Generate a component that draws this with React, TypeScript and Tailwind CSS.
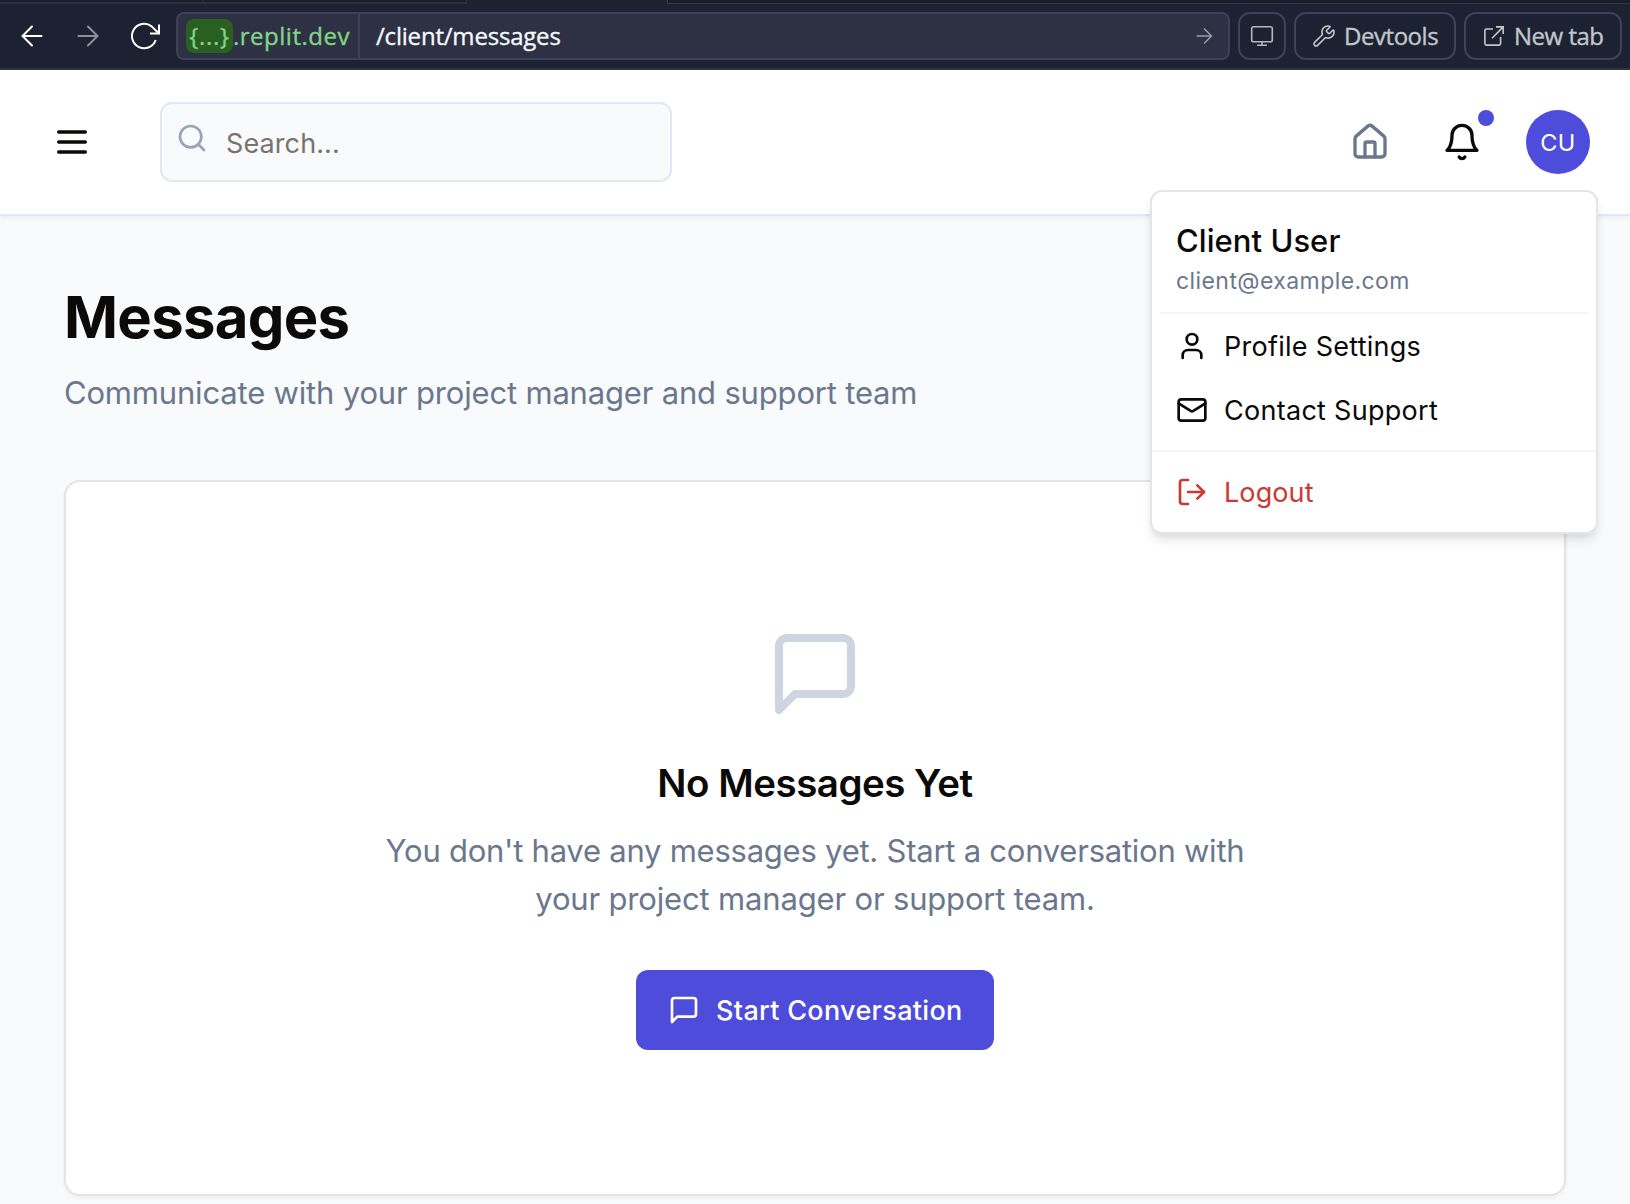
import React from "react";
import { Search, Wrench } from "lucide-react";

type IconProps = { className?: string };

const outline = {
  viewBox: "0 0 24 24",
  fill: "none",
  stroke: "currentColor",
  strokeWidth: 2,
  strokeLinecap: "round" as const,
  strokeLinejoin: "round" as const,
};

function MenuIcon({ className }: IconProps) {
  return (
    <svg {...outline} className={className}>
      <path d="M4 6h16M4 12h16M4 18h16" />
    </svg>
  );
}

function MessageIcon({ className }: IconProps) {
  return (
    <svg {...outline} className={className}>
      <path d="M21 15a2 2 0 0 1-2 2H7l-4 4V5a2 2 0 0 1 2-2h14a2 2 0 0 1 2 2z" />
    </svg>
  );
}

function HouseIcon({ className }: IconProps) {
  return (
    <svg {...outline} className={className}>
      <path d="M15 21v-8a1 1 0 0 0-1-1h-4a1 1 0 0 0-1 1v8" />
      <path d="M3 10a2 2 0 0 1 .709-1.528l7-5.999a2 2 0 0 1 2.582 0l7 5.999A2 2 0 0 1 21 10v9a2 2 0 0 1-2 2H5a2 2 0 0 1-2-2z" />
    </svg>
  );
}

function BellIcon({ className }: IconProps) {
  return (
    <svg {...outline} className={className}>
      <path d="M6 8a6 6 0 0 1 12 0c0 7 3 9 3 9H3s3-2 3-9" />
      <path d="M10.3 21a1.94 1.94 0 0 0 3.4 0" />
    </svg>
  );
}

function UserIcon({ className }: IconProps) {
  return (
    <svg {...outline} className={className}>
      <path d="M19 21v-2a4 4 0 0 0-4-4H9a4 4 0 0 0-4 4v2" />
      <circle cx="12" cy="7" r="4" />
    </svg>
  );
}

function MailIcon({ className }: IconProps) {
  return (
    <svg {...outline} className={className}>
      <rect width="20" height="16" x="2" y="4" rx="2" />
      <path d="m22 7-8.97 5.7a1.94 1.94 0 0 1-2.06 0L2 7" />
    </svg>
  );
}

function LogoutIcon({ className }: IconProps) {
  return (
    <svg {...outline} className={className}>
      <path d="M9 21H5a2 2 0 0 1-2-2V5a2 2 0 0 1 2-2h4" />
      <path d="m16 17 5-5-5-5" />
      <path d="M21 12H9" />
    </svg>
  );
}

function TabStrip() {
  return (
    <div className="flex h-1 w-full">
      <div className="flex w-[467px] border-r border-b-2 border-[#2b3042] bg-[#191e2c]">
        <div className="w-[203px] border-r border-[#2b3042]" />
      </div>
      <div className="w-[200px]" />
      <div className="flex-1 border-b border-l border-[#31364a] bg-[#191e2c]" />
    </div>
  );
}

function BrowserBar() {
  return (
    <div className="h-[70px] w-full bg-[#1d2232] font-['Open_Sans',sans-serif] [-webkit-text-stroke:0.35px_currentColor]">
      <TabStrip />
      <div className="flex h-[66px] items-center border-b-2 border-[#2e3243] pr-2 pl-4">
        <svg className="h-8 w-8 text-white" viewBox="0 0 32 32" fill="none" stroke="currentColor" strokeWidth="2" strokeLinecap="round">
          <path d="M6.5 16H25.5M16 6.5L6.5 16L16 25.5" />
        </svg>
        <svg className="ml-6 h-8 w-8 text-[#8e919a]" viewBox="0 0 32 32" fill="none" stroke="currentColor" strokeWidth="2" strokeLinecap="round">
          <path d="M6.5 16H25.5M16 6.5L25.5 16L16 25.5" />
        </svg>
        <svg className="ml-6 h-8 w-9 text-white" viewBox="0 0 36 32" fill="none" stroke="currentColor" strokeWidth="2">
          <path d="M27.7 20A12.2 12.2 0 1 1 23.6 6.4L30.5 13" />
          <path d="M31 4.5V13.5H22" />
        </svg>
        <div className="ml-3 flex h-12 w-[1054px] items-center rounded-lg border-2 border-[#3d4159] bg-[#2d3143] text-[24px] leading-[34px] whitespace-nowrap">
          <div className="flex h-full w-[182px] items-center border-r-2 border-[#3d4159] pl-2 text-[#82d486]">
            <span className="flex h-[34px] w-[47px] items-center justify-center rounded-lg bg-[#295f20] tracking-[0.7px]">{"{...}"}</span>
            <span className="tracking-[0.5px]">.replit.dev</span>
          </div>
          <span className="ml-4 flex-1 tracking-[-0.2px] text-[#f5f9fc]">/client/messages</span>
          <svg className="mr-[14px] h-5 w-5 text-[#9a9ca4]" viewBox="0 0 20 20" fill="none" stroke="currentColor" strokeWidth="1.5">
            <path d="M2.5 10H17.5M10 2.5L17.5 10L10 17.5" />
          </svg>
        </div>
        <button className="ml-2 flex h-12 w-12 items-center justify-center rounded-xl border-2 border-[#3d4159] text-[#b4b7bb]">
          <svg className="h-6 w-6" viewBox="0 0 24 24" fill="none" stroke="currentColor" strokeWidth="1.6">
            <rect x="1.7" y="2.7" width="20.6" height="15" rx="1.8" />
            <path d="M12 17.7V21.3M7 21.3H17" />
          </svg>
        </button>
        <button className="ml-2 flex h-12 w-[162px] items-center rounded-xl border-2 border-[#3d4159] pl-4 text-[24px] leading-[34px] tracking-[-0.45px] whitespace-nowrap text-[#c2c7cb]">
          <Wrench size={24} strokeWidth={1.6} className="mr-2 shrink-0" />
          Devtools
        </button>
        <button className="ml-2 flex h-12 w-[158px] items-center rounded-xl border-2 border-[#3d4159] pl-4 text-[24px] leading-[34px] tracking-[-0.5px] whitespace-nowrap text-[#c2c7cb]">
          <svg className="mr-2 h-6 w-6 shrink-0" viewBox="0 0 24 24" fill="none" stroke="currentColor" strokeWidth="1.6">
            <path d="M11 5H4.5A1.6 1.6 0 0 0 2.9 6.6V19.5A1.6 1.6 0 0 0 4.5 21.1H17A1.6 1.6 0 0 0 18.6 19.5V13" />
            <path d="M14 2.9H21.2V10M21.2 2.9L10 14.2" />
          </svg>
          New tab
        </button>
      </div>
    </div>
  );
}

function Header() {
  return (
    <header className="flex h-[146px] w-full items-center border-b-2 border-[#e3e7ef] bg-white pr-10 pl-[52px] shadow-[0_2px_4px_rgba(0,0,0,0.05)]">
      <MenuIcon className="h-10 w-10" />
      <div className="ml-[68px] flex h-20 w-[512px] items-center rounded-xl border-2 border-[#e3e7ef] bg-[#f9fafc] pl-[14px]">
        <Search size={32} strokeWidth={2} className="mb-2 text-[#97a4b9]" />
        <span className="ml-[18px] pt-1 text-[27px] leading-10 tracking-[0.1px] text-[#79726d]">Search...</span>
      </div>
      <div className="ml-auto flex items-center">
        <HouseIcon className="h-10 w-10 text-[#6a778d]" />
        <div className="relative ml-[52px]">
          <BellIcon className="h-10 w-10" />
          <span className="absolute -top-3 -right-3 h-4 w-4 rounded-full bg-[#4d4cdb]" />
        </div>
        <div className="ml-11 flex h-16 w-16 items-center justify-center rounded-full bg-[#4d4cdb] pt-[2px] text-[23.5px] tracking-[0.4px] text-white">
          CU
        </div>
      </div>
    </header>
  );
}

function MenuRow({ icon, label, className }: { icon: React.ReactNode; label: string; className: string }) {
  return (
    <div className={`flex h-16 items-center gap-4 px-4 text-[27px] ${className}`}>
      {icon}
      <span className="pt-[2px]">{label}</span>
    </div>
  );
}

function AccountMenu() {
  return (
    <div className="absolute top-[190px] left-[1150px] h-[344px] w-[448px] rounded-xl border-2 border-[#e5e5e5] bg-white py-2 shadow-[0_8px_12px_-2px_rgba(0,0,0,0.1),0_4px_8px_-4px_rgba(0,0,0,0.1)]">
      <div className="mx-2">
        <div className="h-[114px] border-b-2 border-[#f1f4f9] px-4 pt-[17px]">
          <div className="text-[31px] leading-[48px] font-medium tracking-[0.05px]">Client User</div>
          <div className="text-[23px] leading-[33px] tracking-[0.42px] text-[#6a778d]">client@example.com</div>
        </div>
        <MenuRow icon={<UserIcon className="h-8 w-8" />} label="Profile Settings" className="tracking-[0.26px]" />
        <MenuRow icon={<MailIcon className="h-8 w-8" />} label="Contact Support" className="tracking-[0.28px]" />
      </div>
      <div className="my-2 h-[2px] bg-[#f4f4f4]" />
      <div className="mx-2">
        <MenuRow icon={<LogoutIcon className="h-8 w-8" />} label="Logout" className="tracking-[0.1px] text-[#cb3a32]" />
      </div>
    </div>
  );
}

function EmptyMessages() {
  return (
    <section className="flex h-[716px] w-[1502px] flex-col items-center rounded-2xl border-2 border-[#e6e4e3] bg-white pt-36 text-center shadow-[0_2px_4px_rgba(0,0,0,0.05)]">
      <MessageIcon className="h-24 w-24 text-[#ced5e1]" />
      <h3 className="mt-[33px] text-[38.5px] leading-[56px] font-semibold tracking-[-0.5px]">No Messages Yet</h3>
      <p className="mt-4 text-[31px] leading-[48px] tracking-[-0.24px] text-[#6a778d]">
        You don't have any messages yet. Start a conversation with
        <br />
        <span className="tracking-[-0.17px]">your project manager or support team.</span>
      </p>
      <button className="mt-[47px] flex h-20 w-[358px] items-center gap-4 rounded-xl bg-[#4d4cdb] px-8 text-[27px] font-medium tracking-[0.31px] whitespace-nowrap text-white">
        <MessageIcon className="h-8 w-8 shrink-0" />
        <span className="pt-[2px]">Start Conversation</span>
      </button>
    </section>
  );
}

export default function App() {
  return (
    <div className="relative h-[1204px] w-[1630px] overflow-hidden bg-[#f9fafc] font-['Inter',sans-serif] text-[#0c0a09]">
      <BrowserBar />
      <Header />
      <main className="px-16 pt-16">
        <h1 className="text-[58px] leading-[74px] font-bold tracking-[-0.7px]">Messages</h1>
        <p className="mt-[15px] mb-[63px] text-[31px] leading-[48px] tracking-[-0.18px] text-[#6a778d]">
          Communicate with your project manager and support team
        </p>
        <EmptyMessages />
      </main>
      <AccountMenu />
    </div>
  );
}
